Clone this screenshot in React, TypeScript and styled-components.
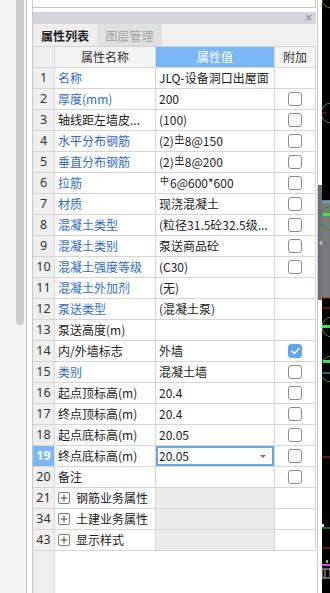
import React from "react";
import styled, { createGlobalStyle, css } from "styled-components";

const GlobalStyle = createGlobalStyle`
  html, body { margin: 0; padding: 0; background: #ffffff; }
  body {
    font-family: "Noto Sans CJK SC", "Microsoft YaHei", "Noto Sans", sans-serif;
    font-size: 12px;
    color: #222;
  }
  * { box-sizing: border-box; }
`;

const Page = styled.div`
  display: flex;
  width: 330px;
  height: 593px;
  overflow: hidden;
  background: #fff;
`;

const LeftStrip = styled.div`
  width: 27px;
  flex-shrink: 0;
  background: #f4f4f4;
  border-right: 1px solid #c6c6c6;
  padding-left: 16px;
`;

const ScrollThumb = styled.div`
  width: 8px;
  height: 325px;
  background: #cdcdcd;
  border-radius: 0 0 4px 4px;
`;

const Gutter = styled.div<{ $w: number }>`
  width: ${(p) => p.$w}px;
  flex-shrink: 0;
  background: #fff;
`;

const Panel = styled.div`
  width: 284px;
  flex-shrink: 0;
  border-left: 1px solid #c8c8c8;
  display: flex;
  flex-direction: column;
  background: #fff;
`;

const TopBox = styled.div`
  height: 8px;
  border-bottom: 1px solid #c4c4c4;
  border-right: 1px solid #c4c4c4;
  background: #fff;
  margin-bottom: 4px;
`;

const TitleBar = styled.div`
  height: 12px;
  background: #d4d5da;
  display: flex;
  align-items: center;
  justify-content: flex-end;
  padding-right: 3px;
  color: #8a8a8a;
  font-family: "DejaVu Sans", sans-serif;
  font-size: 10px;
  line-height: 12px;
`;

const TabBar = styled.div`
  height: 22px;
  background: #f0f0f0;
  display: flex;
`;

const Tab = styled.div<{ $active?: boolean }>`
  width: ${(p) => (p.$active ? 64 : 65)}px;
  display: flex;
  align-items: center;
  justify-content: center;
  font-size: 12px;
  ${(p) =>
    p.$active
      ? css`
          background: #efefef;
          color: #222;
          font-weight: 600;
        `
      : css`
          background: #e1e1e1;
          color: #a2a2a2;
        `}
`;

const Table = styled.div`
  border-top: 1px solid #d3d3d3;
  display: flex;
  flex-direction: column;
  width: 283px;
`;

const Row = styled.div`
  display: grid;
  grid-template-columns: 22px 101px 119px 41px;
  height: 21px;
`;

const Cell = styled.div<{ $bg?: string; $align?: "center" | "start" }>`
  border-right: 1px solid #d6d6d6;
  border-bottom: 1px solid #d6d6d6;
  background: ${(p) => p.$bg || "#fff"};
  display: flex;
  align-items: center;
  justify-content: ${(p) => (p.$align === "center" ? "center" : "flex-start")};
  padding: 0 3px;
  white-space: nowrap;
  overflow: hidden;
  line-height: 20px;
`;

const NumCell = styled(Cell)<{ $selected?: boolean }>`
  justify-content: center;
  padding: 0;
  font-family: "Noto Sans", "Noto Sans CJK SC", sans-serif;
  font-size: 12.5px;
  background: ${(p) => (p.$selected ? "#7bb8f6" : "#efefef")};
  color: ${(p) => (p.$selected ? "#fff" : "#333")};
  font-weight: ${(p) => (p.$selected ? 700 : 400)};
`;

const HeadCell = styled(Cell)<{ $active?: boolean }>`
  justify-content: center;
  background: ${(p) => (p.$active ? "#7ab7f6" : "#f5f5f5")};
  color: ${(p) => (p.$active ? "#fff" : "#333")};
`;

const NameText = styled.span<{ $link?: boolean }>`
  color: ${(p) => (p.$link ? "#2f6bd8" : "#222")};
  overflow: hidden;
  text-overflow: clip;
`;

const ValueCell = styled(Cell)<{ $editing?: boolean }>`
  padding-left: 3px;
  ${(p) =>
    p.$editing &&
    css`
      box-shadow: inset 0 0 0 2px #69a6e6;
      padding-right: 8px;
    `}
`;

const DropArrow = styled.span`
  margin-left: auto;
  width: 0;
  height: 0;
  border-left: 3px solid transparent;
  border-right: 3px solid transparent;
  border-top: 3px solid #777;
`;

const Rebar = styled.span<{ $bar?: boolean }>`
  display: inline-block;
  font-size: 9px;
  line-height: 9px;
  vertical-align: 4px;
  margin: 0 1px 0 1px;
  ${(p) =>
    p.$bar &&
    css`
      border-bottom: 1px solid #222;
      line-height: 8px;
    `}
`;

const Check = styled.span<{ $checked?: boolean }>`
  width: 14px;
  height: 14px;
  border-radius: 3px;
  display: flex;
  align-items: center;
  justify-content: center;
  ${(p) =>
    p.$checked
      ? css`
          background: #5ea6f2;
          border: 1px solid #5ea6f2;
        `
      : css`
          background: #fff;
          border: 1px solid #8c8c8c;
        `}
`;

const PlusBox = styled.span`
  width: 12px;
  height: 12px;
  border: 1px solid #7a7a7a;
  border-radius: 2px;
  margin-right: 6px;
  display: flex;
  align-items: center;
  justify-content: center;
  flex-shrink: 0;
`;

const Filler = styled.div`
  flex: 1;
  display: grid;
  grid-template-columns: 22px 1fr;
`;

const FillerNum = styled.div`
  background: #efefef;
  border-right: 1px solid #dadada;
`;

const Separator = styled.div`
  width: 1px;
  flex-shrink: 0;
  background: #c8c8c8;
`;

const SplitterColumn = styled.div`
  width: 4px;
  flex-shrink: 0;
  background: #fff;
  padding-top: 185px;
`;

const SplitterHandle = styled.div`
  height: 115px;
  background: #6c717c;
  display: flex;
  align-items: center;
  justify-content: center;
`;

const HandleArrow = styled.span`
  width: 0;
  height: 0;
  border-top: 3px solid transparent;
  border-bottom: 3px solid transparent;
  border-right: 3px solid #b9bcc3;
`;

const CanvasBox = styled.div`
  width: 8px;
  flex-shrink: 0;
  background: #000;
`;

type RowData = {
  n: number;
  name: string;
  link?: boolean;
  value: React.ReactNode;
  cb?: boolean;
  checked?: boolean;
  editing?: boolean;
};

const rebarC = <Rebar $bar>中</Rebar>;
const rebarA = <Rebar>中</Rebar>;

const rows: RowData[] = [
  { n: 1, name: "名称", link: true, value: "JLQ-设备洞口出屋面" },
  { n: 2, name: "厚度(mm)", link: true, value: "200", cb: true },
  { n: 3, name: "轴线距左墙皮...", value: "(100)", cb: true },
  { n: 4, name: "水平分布钢筋", link: true, value: <>(2){rebarC}8@150</>, cb: true },
  { n: 5, name: "垂直分布钢筋", link: true, value: <>(2){rebarC}8@200</>, cb: true },
  { n: 6, name: "拉筋", link: true, value: <>{rebarA}6@600*600</>, cb: true },
  { n: 7, name: "材质", link: true, value: "现浇混凝土", cb: true },
  { n: 8, name: "混凝土类型", link: true, value: "(粒径31.5砼32.5级...", cb: true },
  { n: 9, name: "混凝土类别", link: true, value: "泵送商品砼", cb: true },
  { n: 10, name: "混凝土强度等级", link: true, value: "(C30)", cb: true },
  { n: 11, name: "混凝土外加剂", link: true, value: "(无)" },
  { n: 12, name: "泵送类型", link: true, value: "(混凝土泵)" },
  { n: 13, name: "泵送高度(m)", value: "" },
  { n: 14, name: "内/外墙标志", value: "外墙", cb: true, checked: true },
  { n: 15, name: "类别", link: true, value: "混凝土墙", cb: true },
  { n: 16, name: "起点顶标高(m)", value: "20.4", cb: true },
  { n: 17, name: "终点顶标高(m)", value: "20.4", cb: true },
  { n: 18, name: "起点底标高(m)", value: "20.05", cb: true },
  { n: 19, name: "终点底标高(m)", value: "20.05", cb: true, editing: true },
  { n: 20, name: "备注", value: "", cb: true },
];

const groups = [
  { n: 21, name: "钢筋业务属性" },
  { n: 34, name: "土建业务属性" },
  { n: 43, name: "显示样式" },
];

const CheckMark = () => (
  <svg width="9" height="8" viewBox="0 0 9 8">
    <path d="M1 4.2 L3.5 6.5 L8 1.5" fill="none" stroke="#fff" strokeWidth="1.6" strokeLinecap="round" strokeLinejoin="round" />
  </svg>
);

const PlusIcon = () => (
  <svg width="8" height="8" viewBox="0 0 8 8">
    <path d="M4 0.5 V7.5 M0.5 4 H7.5" stroke="#444" strokeWidth="1" />
  </svg>
);

const CadCanvas = () => (
  <svg width="8" height="593" viewBox="0 0 8 593">
    <rect x="0" y="0" width="8" height="593" fill="#000" />
    <rect x="0" y="200" width="8" height="98" fill="#7a7a7a" />
    <line x1="0" y1="202" x2="8" y2="202" stroke="#2fd6e6" strokeWidth="1" />
    <g fill="none" stroke="#1f9e2a" strokeWidth="1">
      <circle cx="9" cy="-1" r="9" />
      <circle cx="9" cy="113" r="10" />
      <circle cx="10" cy="218" r="12" />
      <circle cx="10" cy="327" r="10" />
      <circle cx="10" cy="369" r="13" />
    </g>
    <line x1="0" y1="113" x2="5" y2="113" stroke="#d62020" strokeWidth="1" />
    <rect x="1" y="213" width="7" height="3" fill="#3fe43f" />
    <rect x="0" y="325" width="8" height="3" fill="#3fe43f" />
    <rect x="1" y="360" width="7" height="3" fill="#3fe43f" />
    <line x1="0" y1="298" x2="8" y2="298" stroke="#c41c1c" strokeWidth="1" />
    <line x1="0" y1="308" x2="8" y2="308" stroke="#c41c1c" strokeWidth="1" />
    <line x1="0" y1="373" x2="8" y2="373" stroke="#2fd6e6" strokeWidth="1" />
    <line x1="0" y1="457" x2="8" y2="457" stroke="#9a1414" strokeWidth="1.5" />
    <line x1="0" y1="528" x2="8" y2="528" stroke="#1f8f2a" strokeWidth="1.5" />
    <rect x="0" y="524" width="2" height="3" fill="#ddd" />
    <line x1="0" y1="548" x2="8" y2="548" stroke="#d62020" strokeWidth="1" />
    <line x1="0" y1="565" x2="8" y2="565" stroke="#ff2cff" strokeWidth="2" />
    <rect x="0" y="569" width="8" height="9" fill="none" stroke="#bbb" strokeWidth="1" />
    <line x1="3" y1="569" x2="3" y2="578" stroke="#bbb" strokeWidth="1" />
    <rect x="4" y="560" width="2" height="3" fill="#3fe43f" />
  </svg>
);

export default function App() {
  return (
    <>
      <GlobalStyle />
      <Page>
        <LeftStrip>
          <ScrollThumb />
        </LeftStrip>
        <Gutter $w={5} />
        <Panel>
          <TopBox />
          <TitleBar>×</TitleBar>
          <TabBar>
            <Tab $active>属性列表</Tab>
            <Tab>图层管理</Tab>
          </TabBar>
          <Table>
            <Row>
              <NumCell />
              <HeadCell>属性名称</HeadCell>
              <HeadCell $active>属性值</HeadCell>
              <HeadCell>附加</HeadCell>
            </Row>
            {rows.map((r) => (
              <Row key={r.n}>
                <NumCell $selected={r.editing}>{r.n}</NumCell>
                <Cell>
                  <NameText $link={r.link}>{r.name}</NameText>
                </Cell>
                <ValueCell $editing={r.editing}>
                  <span>{r.value}</span>
                  {r.editing && <DropArrow />}
                </ValueCell>
                <Cell $align="center">
                  {r.cb && <Check $checked={r.checked}>{r.checked && <CheckMark />}</Check>}
                </Cell>
              </Row>
            ))}
            {groups.map((g) => (
              <Row key={g.n}>
                <NumCell>{g.n}</NumCell>
                <Cell>
                  <PlusBox>
                    <PlusIcon />
                  </PlusBox>
                  <NameText>{g.name}</NameText>
                </Cell>
                <Cell $bg="#ebebeb" />
                <Cell />
              </Row>
            ))}
          </Table>
          <Filler>
            <FillerNum />
            <div />
          </Filler>
        </Panel>
        <Gutter $w={1} />
        <Separator />
        <SplitterColumn>
          <SplitterHandle>
            <HandleArrow />
          </SplitterHandle>
        </SplitterColumn>
        <CanvasBox>
          <CadCanvas />
        </CanvasBox>
      </Page>
    </>
  );
}
